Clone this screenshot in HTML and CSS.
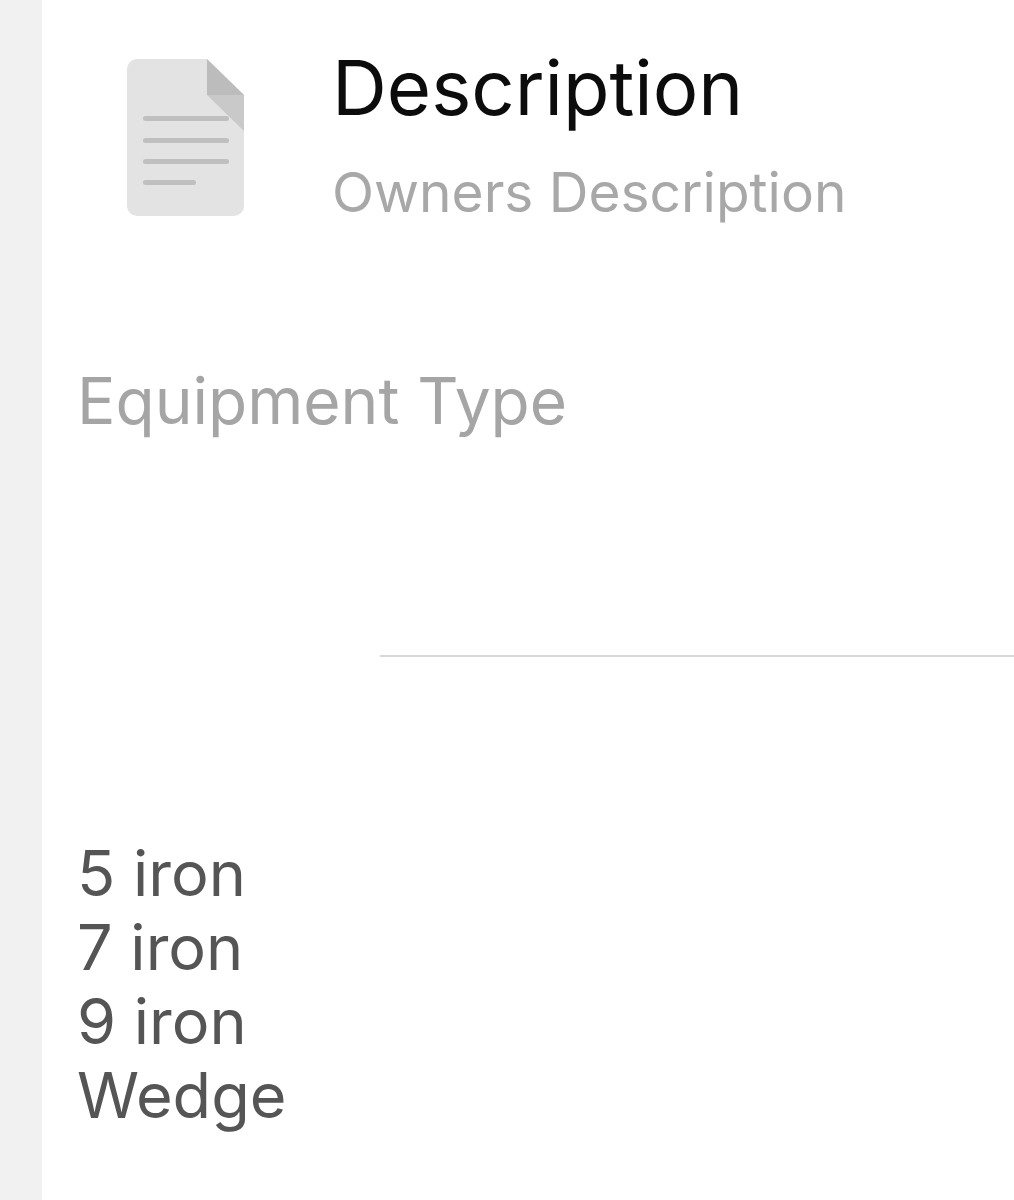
FILE: index.html
```html
<!DOCTYPE html>
<html lang="en">
<head>
<meta charset="utf-8">
<title>Description</title>
<link rel="stylesheet" href="styles.css">
</head>
<body>
<main class="panel">
  <header class="head">
    <svg class="doc" width="118" height="160" viewBox="0 0 118 160">
      <path d="M10 1H80L117 37V148a10 10 0 0 1-10 10H10a10 10 0 0 1-10-10V11a10 10 0 0 1 10-10z" fill="#e3e3e3"/>
      <path d="M80 1L117 37H80z" fill="#bcbcbc"/>
      <path d="M80 37H117V73z" fill="#c9c9c9"/>
      <g fill="#bfbfbf"><rect x="16" y="58" width="86" height="5" rx="2.5"/><rect x="16" y="80" width="86" height="5" rx="2.5"/><rect x="16" y="101" width="86" height="5" rx="2.5"/><rect x="16" y="122" width="53" height="5" rx="2.5"/></g>
    </svg>
    <div class="titles">
      <h1 class="title">Description</h1>
      <p class="sub">Owners Description</p>
    </div>
  </header>
  <h2 class="label">Equipment Type</h2>
  <hr class="rule">
  <ul class="items">
    <li>5 iron</li>
    <li>7 iron</li>
    <li>9 iron</li>
    <li>Wedge</li>
  </ul>
</main>
</body>
</html>
```
FILE: styles.css
```css
html, body { margin: 0; padding: 0; }
body { background: #f1f1f1; font-family: Inter, "Noto Sans", sans-serif; }
.panel { margin-left: 42px; height: 1200px; background: #fff; overflow: hidden; padding-left: 36px; box-sizing: border-box; }
.head { display: flex; padding: 58px 0 0 49px; }
.doc { display: block; flex: none; }
.titles { margin-left: 87px; margin-top: -16px; }
.title { margin: 0; font-size: 76px; font-weight: 400; line-height: 90px; color: #0c0c0c; }
.sub { margin: 27px 0 0; font-size: 55px; line-height: 66px; color: #a8a8a8; }
.label { margin: 139px 0 0 -1px; font-size: 64px; font-weight: 400; line-height: 74px; color: #a5a5a5; }
.rule { margin: 217px 0 0 302px; height: 2px; border: 0; background: #d8d8d8; }
.items { margin: 179px 0 0 -1px; padding: 0; list-style: none; font-size: 63px; line-height: 74px; color: #555; }
```
